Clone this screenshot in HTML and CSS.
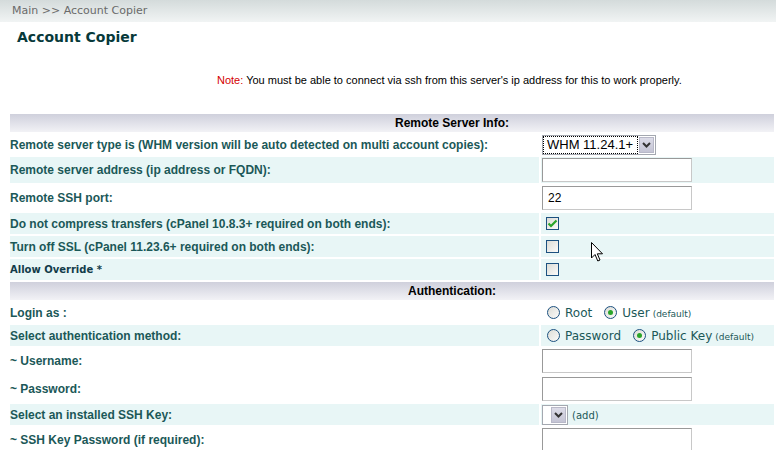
FILE: index.html
```html
<!DOCTYPE html>
<html lang="en">
<head>
    <meta charset="UTF-8">
    <title>Account Copier</title>
    <link rel="stylesheet" href="styles.css">
</head>
<body>
    <div class="breadcrumb">Main &gt;&gt; Account Copier</div>
    <h1 class="page-title">Account Copier</h1>

    <p class="note"><span class="note-label">Note:</span> You must be able to connect via ssh from this server's ip address for this to work properly.</p>

    <table class="copier">
        <tr><th colspan="2">Remote Server Info:</th></tr>
        <tr class="plain">
            <td class="label">Remote server type is (WHM version will be auto detected on multi account copies):</td>
            <td class="value">
                <span class="fake-select focused"><span class="sel-text">WHM 11.24.1+</span><span class="sel-btn"><svg width="9" height="6" viewBox="0 0 9 6"><path d="M1 1 L4.5 4.5 L8 1" fill="none" stroke="#333" stroke-width="2"/></svg></span></span>
            </td>
        </tr>
        <tr class="shade tall">
            <td class="label">Remote server address (ip address or FQDN):</td>
            <td class="value"><span class="text-input"></span></td>
        </tr>
        <tr class="plain tall">
            <td class="label">Remote SSH port:</td>
            <td class="value"><span class="text-input">22</span></td>
        </tr>
        <tr class="shade">
            <td class="label">Do not compress transfers (cPanel 10.8.3+ required on both ends):</td>
            <td class="value"><span class="check"><svg width="11" height="9" viewBox="0 0 11 9"><path d="M1.5 4.5 L4 7 L9.5 1.5" fill="none" stroke="#2aa52a" stroke-width="2.2"/></svg></span></td>
        </tr>
        <tr class="shade">
            <td class="label">Turn off SSL (cPanel 11.23.6+ required on both ends):</td>
            <td class="value"><span class="check"></span></td>
        </tr>
        <tr class="shade">
            <td class="label small">Allow Override *</td>
            <td class="value"><span class="check"></span></td>
        </tr>
        <tr><th colspan="2">Authentication:</th></tr>
        <tr class="plain">
            <td class="label">Login as :</td>
            <td class="value opts">
                <span class="radio"></span><span class="opt">Root</span>
                <span class="radio on"></span><span class="opt">User</span><span class="dflt">(default)</span>
            </td>
        </tr>
        <tr class="shade">
            <td class="label">Select authentication method:</td>
            <td class="value opts">
                <span class="radio"></span><span class="opt">Password</span>
                <span class="radio on"></span><span class="opt">Public Key</span><span class="dflt">(default)</span>
            </td>
        </tr>
        <tr class="plain tall">
            <td class="label">~ Username:</td>
            <td class="value"><span class="text-input"></span></td>
        </tr>
        <tr class="plain tall">
            <td class="label">~ Password:</td>
            <td class="value"><span class="text-input"></span></td>
        </tr>
        <tr class="shade">
            <td class="label">Select an installed SSH Key:</td>
            <td class="value opts">
                <span class="fake-select empty"><span class="sel-text"></span><span class="sel-btn"><svg width="9" height="6" viewBox="0 0 9 6"><path d="M1 1 L4.5 4.5 L8 1" fill="none" stroke="#333" stroke-width="2"/></svg></span></span>
                <span class="add">(add)</span>
            </td>
        </tr>
        <tr class="plain tall">
            <td class="label">~ SSH Key Password (if required):</td>
            <td class="value"><span class="text-input"></span></td>
        </tr>
    </table>

    <svg class="cursor" width="13" height="21" viewBox="0 0 13 21"><path d="M0.5 0.5 L0.5 16 L4 12.5 L6.8 19 L9 18 L6.3 11.8 L11.5 11.8 Z" fill="#fff" stroke="#000" stroke-width="1"/></svg>
</body>
</html>
```

FILE: styles.css
```css
body {
    margin: 0;
    background: #fff;
    font-family: "DejaVu Sans", Verdana, sans-serif;
    overflow: hidden;
    position: relative;
}
.breadcrumb {
    height: 22px;
    line-height: 21px;
    padding-left: 12px;
    font-size: 11px;
    color: #6a6a6a;
    background: linear-gradient(#d4dbdb, #f1f4f4);
}
.page-title {
    margin: 6px 0 0 17px;
    font-size: 14px;
    font-weight: bold;
    color: #07393a;
    height: 18px;
    line-height: 18px;
}
.note {
    margin: 28px 0 0 217px;
    font-family: "Liberation Sans", Arial, sans-serif;
    font-size: 11px;
    color: #000;
    height: 14px;
}
.note-label {
    color: #d40000;
}
.copier {
    margin: 24px 0 0 8px;
    width: 768px;
    border-spacing: 2px;
    font-family: "Liberation Sans", Arial, sans-serif;
}
/* the real table is wider than the window, so its centred headings sit right of middle */
.copier th {
    height: 18px;
    padding: 0 0 0 120px;
    font-size: 12px;
    font-weight: bold;
    color: #000;
    background: linear-gradient(#cfd0dc, #f2f2f6);
}
.copier td {
    padding: 0;
    height: 21px;
    line-height: 14px;
}
.copier tr.tall td {
    height: 26px;
}
.copier tr.shade td {
    background: #e8f6f6;
}
.copier td.label {
    width: 529px;
    font-size: 12px;
    font-weight: bold;
    color: #1b5858;
}
.copier td.label.small {
    font-family: "DejaVu Sans", Verdana, sans-serif;
    font-size: 10px;
    color: #123c4a;
}
.copier td.value {
    padding-left: 1px;
}
.text-input {
    display: block;
    box-sizing: border-box;
    width: 150px;
    height: 24px;
    border: 1px solid #c8c8c8;
    border-top-color: #999;
    border-left-color: #999;
    padding: 0 5px;
    font-size: 12px;
    line-height: 22px;
    color: #000;
    background: #fff;
}
.fake-select {
    display: inline-flex;
    align-items: center;
    box-sizing: border-box;
    height: 20px;
    border: 1px solid #a4a8b0;
    background: #fff;
    vertical-align: middle;
}
.fake-select .sel-text {
    font-size: 13px;
    color: #000;
    padding: 0 4px 0 3px;
    line-height: 16px;
}
.fake-select.focused .sel-text {
    outline: 1px dotted #000;
    margin-left: 1px;
}
.fake-select.empty .sel-text {
    width: 6px;
    padding: 0;
}
.sel-btn {
    display: flex;
    align-items: center;
    justify-content: center;
    width: 15px;
    height: 16px;
    margin: 0 1px 0 2px;
    background: linear-gradient(#dcdce8, #c4c4d4);
    border: 1px solid #b8b8c8;
    box-sizing: border-box;
}
.check {
    display: flex;
    align-items: center;
    justify-content: center;
    box-sizing: border-box;
    width: 13px;
    height: 13px;
    margin-left: 4px;
    border: 1px solid #1c5180;
    background: linear-gradient(135deg, #dcdcd6, #fbfbfa);
}
.opts {
    font-family: "DejaVu Sans", Verdana, sans-serif;
    color: #1b5858;
    white-space: nowrap;
}
.radio {
    display: inline-block;
    box-sizing: border-box;
    width: 13px;
    height: 13px;
    margin-left: 5px;
    border: 1px solid #1c5180;
    border-radius: 50%;
    background: linear-gradient(135deg, #dcdcd6, #fbfbfa);
    vertical-align: -2px;
    position: relative;
}
.radio.on::after {
    content: "";
    position: absolute;
    left: 3px;
    top: 3px;
    width: 5px;
    height: 5px;
    border-radius: 50%;
    background: #2aa52a;
}
.opt {
    font-size: 12px;
    margin-left: 5px;
    margin-right: 2px;
}
.dflt {
    font-size: 9px;
    margin-left: 1px;
}
.add {
    font-size: 10px;
    margin-left: -1px;
}
.cursor {
    position: absolute;
    left: 591px;
    top: 242px;
}
```
